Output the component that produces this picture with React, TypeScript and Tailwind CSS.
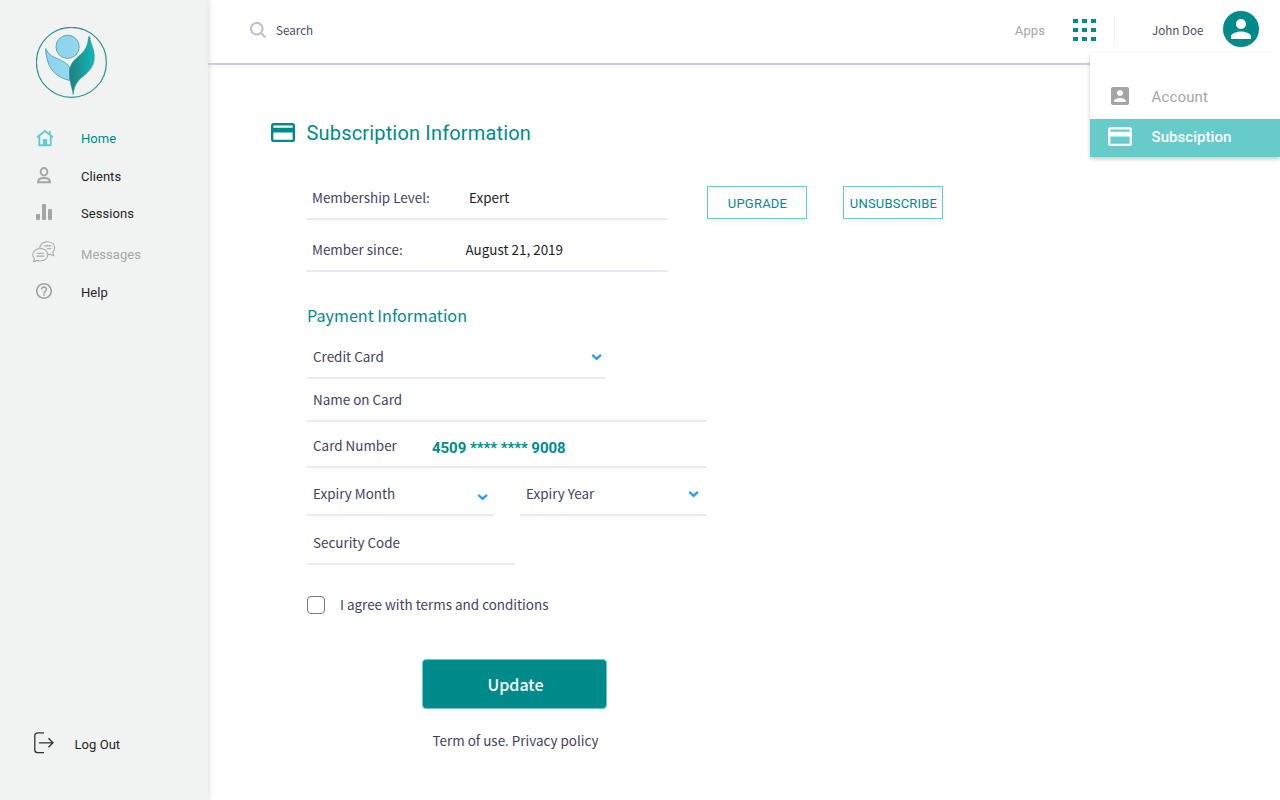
import type { ReactNode } from "react";

const CARD_PATH =
  "M20 4H4c-1.11 0-1.99.89-1.99 2L2 18c0 1.11.89 2 2 2h16c1.11 0 2-.89 2-2V6c0-1.11-.89-2-2-2zm0 14H4v-6h16v6zm0-10H4V6h16v2z";

function CardIcon({ className }: { className: string }) {
  return (
    <svg viewBox="2 4 20 16" preserveAspectRatio="none" className={className} fill="currentColor">
      <path d={CARD_PATH} />
    </svg>
  );
}

function Logo() {
  return (
    <svg width="72" height="72" viewBox="0 0 72 72" fill="none">
      <defs>
        <linearGradient id="leaf" x1="0" x2="1" y1="0" y2="0">
          <stop offset="0" stopColor="#22807f" />
          <stop offset="1" stopColor="#0cb9b7" />
        </linearGradient>
        <linearGradient id="sky" x1="0" x2="1" y1="0" y2="0">
          <stop offset="0" stopColor="#8fd3ee" />
          <stop offset="1" stopColor="#93d8ed" />
        </linearGradient>
      </defs>
      <circle cx="35.400" cy="35.400" r="35" stroke="#2f9391" strokeWidth="1.2" />
      <circle cx="31.600" cy="19.800" r="11.6" fill="url(#sky)" stroke="#56a9b4" strokeWidth="1" />
      <path
        d="M9.700 21.500C12.500 27 15.500 29.500 21 31.500C28 34.500 32 37 33.800 41V53.500C23 51 15 45 12 35C10.500 30 9.500 26 9.700 21.500Z"
        fill="url(#sky)"
        stroke="#56a9b4"
        strokeWidth="1"
      />
      <path
        d="M52.500 10C52.300 18 49 24 44 28C37 34 33.500 37.500 33.500 46C33.500 55 36 60 37.200 67.500C38 60 40 56 45 51C54 44 59 38 58.200 28C57.600 20 54.500 17 53.800 10Q53 9 52.500 10Z"
        fill="url(#leaf)"
        stroke="#2a9190"
        strokeWidth="0.6"
      />
    </svg>
  );
}

function HomeIcon() {
  return (
    <svg width="18" height="18" viewBox="0 0 18 18" fill="none" stroke="#63cbca" strokeWidth="1.9">
      <path d="M1 8.300L9 2l8 6.300" />
      <path d="M3.300 7v9.300h11.400V7" />
      <path d="M13.800 2v3.500" strokeWidth="1.800" />
      <path d="M7.300 16v-5.500h3.400V16z" fill="#63cbca" strokeWidth="1" />
    </svg>
  );
}

function ClientIcon() {
  return (
    <svg width="16" height="17" viewBox="0 0 16 17" fill="none" stroke="#a5a5a5" strokeWidth="2">
      <ellipse cx="8" cy="4.800" rx="3.300" ry="3.700" />
      <path d="M2 15.300c0-3 2.500-4.300 6-4.300s6 1.300 6 4.300z" />
    </svg>
  );
}

function SessionsIcon() {
  return (
    <svg width="16" height="16" viewBox="0 0 16 16" fill="#a5a5a5">
      <rect x="0" y="10" width="4" height="6" rx="1" />
      <rect x="6" y="0" width="4" height="16" rx="1" />
      <rect x="12" y="5" width="4" height="11" rx="1" />
    </svg>
  );
}

function MessagesIcon() {
  return (
    <svg width="23.5" height="21.5" viewBox="0 0 24 22" fill="none" stroke="#a8a8a8" strokeWidth="1.100" strokeLinecap="round">
      <path d="M8 7.500C8 3.500 11 .800 15.500 .800S23.200 3.300 23.200 7c0 2-.800 3.500-2 4.500l.900 3.500-3.500-1.500-2.300.300" />
      <path d="M8.500 7.700C4 7.700 .700 10.500 .700 14c0 1.700.700 3 1.800 4.200L1.500 21.200l3.800-1.300c1 .400 2 .500 3.200.500 4.500 0 7.700-2.700 7.700-6.300S13 7.700 8.500 7.700z" />
      <path d="M13 5h6.500M15.500 8h4M5 12.500h7M5 15.500h7" />
    </svg>
  );
}

function HelpIcon() {
  return (
    <svg width="16" height="16" viewBox="2 2 20 20" fill="#a0a0a0">
      <path d="M11 18h2v-2h-2v2zm1-16C6.480 2 2 6.480 2 12s4.480 10 10 10 10-4.480 10-10S17.520 2 12 2zm0 18c-4.410 0-8-3.590-8-8s3.590-8 8-8 8 3.590 8 8-3.590 8-8 8zm0-14c-2.210 0-4 1.790-4 4h2c0-1.100.900-2 2-2s2 .900 2 2c0 2-3 1.750-3 5h2c0-2.250 3-2.500 3-5 0-2.210-1.790-4-4-4z" />
    </svg>
  );
}

function LogoutIcon() {
  return (
    <svg width="20" height="22" viewBox="0 0 20 22" fill="none" stroke="#2c3331" strokeWidth="1.300">
      <path d="M10 .900H4Q.800 .900 .800 4V18Q.800 20.700 4 20.700H10" />
      <path d="M5 10.800h14M14.500 6.300L19 10.800l-4.500 4.500" />
    </svg>
  );
}

function Chevron() {
  return (
    <svg width="11" height="8" viewBox="0 0 11 8" fill="none" stroke="#2a9bf5" strokeWidth="2.200">
      <path d="M1.300 1.900l4.300 4 4.300-4" />
    </svg>
  );
}

const NAV: { label: string; icon: ReactNode; row: string; text: string; pad: string }[] = [
  { label: "Home", icon: <HomeIcon />, row: "h-[38px]", text: "text-[#008b8a]", pad: "pl-[36px] pb-[3px]" },
  { label: "Clients", icon: <ClientIcon />, row: "h-[37px]", text: "text-[#252525]", pad: "pl-[36px] pb-[3px]" },
  { label: "Sessions", icon: <SessionsIcon />, row: "h-[37px]", text: "text-[#252525]", pad: "pl-[36px] pb-[3px]" },
  { label: "Messages", icon: <MessagesIcon />, row: "h-[45px]", text: "text-[#a7a7a7]", pad: "pl-[32px] pb-[6px]" },
  { label: "Help", icon: <HelpIcon />, row: "h-[31px]", text: "text-[#252525]", pad: "pl-[36px] pb-[3px]" },
];

function Sidebar() {
  return (
    <aside className="flex w-[207.5px] shrink-0 flex-col bg-[#f0f3f2] pt-[27px] shadow-[1px_0_5px_rgba(0,0,0,0.14)]">
      <div className="h-[93px] pl-[36px]">
        <Logo />
      </div>
      <nav className="font-['Roboto',sans-serif] text-[13px] tracking-[0.05px]">
        {NAV.map((n) => (
          <a key={n.label} className={`flex items-center ${n.row} ${n.text}`}>
            <span className={`w-[81px] ${n.pad}`}>{n.icon}</span>
            <span>{n.label}</span>
          </a>
        ))}
      </nav>
      <a className="mt-auto mb-[43px] flex h-6 items-center font-['Roboto',sans-serif] text-[13px] tracking-[0.05px] text-[#252525]">
        <span className="w-[74.5px] pb-[4px] pl-[34px]">
          <LogoutIcon />
        </span>
        Log Out
      </a>
    </aside>
  );
}

function Header() {
  return (
    <header className="flex h-[65px] items-center border-b-2 border-[#c8ccd6] pb-[2px] pl-[42.5px] shadow-[0_2px_5px_rgba(0,0,0,0.04)]">
      <svg width="16" height="16" viewBox="0 0 17 17" fill="none" stroke="#bcbccb" strokeWidth="2.100" className="mb-px">
        <circle cx="7.200" cy="7.200" r="6.200" />
        <path d="M11.700 11.700l4.500 4.500" />
      </svg>
      <span className="ml-[10px] pb-[2px] text-[11.65px] text-[#4d4d63]">Search</span>
      <div className="ml-auto flex items-center">
        <span className="font-['Roboto',sans-serif] text-[13px] tracking-[0.1px] text-[#a5a5a5]">Apps</span>
        <div className="mb-px ml-[28px] grid grid-cols-3 gap-x-1 gap-y-[5px]">
          {Array.from({ length: 9 }, (_, i) => (
            <span key={i} className="h-1 w-[5px] bg-[#008b8a]" />
          ))}
        </div>
        <span className="mb-px ml-[18px] h-7 w-px bg-[#ebebf2]" />
        <span className="ml-[37px] w-[71px] pb-[2px] text-[11.65px] text-[#4d4d63]">John Doe</span>
        <span className="mr-[21px] mb-1 flex size-9 items-center justify-center rounded-full bg-[#008b8a]">
          <svg width="30" height="30" viewBox="0 0 24 24" fill="#fff">
            <path d="M12 12c2.210 0 4-1.790 4-4s-1.790-4-4-4-4 1.790-4 4 1.790 4 4 4zm0 2c-2.670 0-8 1.340-8 4v2h16v-2c0-2.660-5.330-4-8-4z" />
          </svg>
        </span>
      </div>
    </header>
  );
}

function AccountMenu() {
  return (
    <div className="absolute top-[53px] right-0 w-[190.5px] bg-white pt-[26px] font-['Roboto',sans-serif] text-[15px] shadow-[0_2px_4px_rgba(0,0,0,0.22)]">
      <div className="flex h-10 items-center pb-[5px] text-[#a5a5a5]">
        <span className="w-[62px] pb-[1px] pl-[21.5px]">
          <svg width="18" height="18" viewBox="3 3 18 18" fill="currentColor">
            <path d="M3 5v14c0 1.100.890 2 2 2h14c1.100 0 2-.900 2-2V5c0-1.100-.900-2-2-2H5c-1.110 0-2 .900-2 2zm12 4c0 1.660-1.340 3-3 3s-3-1.340-3-3 1.340-3 3-3 3 1.340 3 3zm-9 8c0-2 4-3.100 6-3.100s6 1.100 6 3.100v1H6v-1z" />
          </svg>
        </span>
        <span className="pt-[2px] tracking-[0.15px]">Account</span>
      </div>
      <div className="flex h-[38px] items-center bg-[#67cbca] pb-[2px] font-medium text-white">
        <span className="w-[62px] pb-[1px] pl-[18.5px]">
          <CardIcon className="h-[19.2px] w-6" />
        </span>
        <span className="tracking-[0.05px]">Subsciption</span>
      </div>
    </div>
  );
}

function Field({ label, className, children }: { label: string; className: string; children?: ReactNode }) {
  return (
    <div className={`flex items-center border-b-2 border-[#ebebef] pl-[6px] ${className}`}>
      <span>{label}</span>
      {children}
    </div>
  );
}

function OutlineButton({ children }: { children: ReactNode }) {
  return (
    <button className="h-[33px] w-[100px] border border-[#67cbca] bg-white pt-[3px] pl-px font-['Roboto',sans-serif] text-[13px] tracking-[0.2px] whitespace-nowrap text-[#008b8a] shadow-[0_3px_6px_rgba(0,0,0,0.06),inset_0_3px_6px_rgba(0,0,0,0.03)]">
      {children}
    </button>
  );
}

function Subscription() {
  return (
    <main className="flex flex-col pt-[56px] pl-[63.5px] text-[13.45px] text-[#43425d]">
      <h1 className="flex h-6 items-center font-['Roboto',sans-serif] text-xl tracking-[0.17px] text-[#008b8a]">
        <CardIcon className="mr-[11.5px] mb-[1px] h-[19.2px] w-6" />
        Subscription Information
      </h1>
      <div className="mt-[32px] ml-[35px] flex">
        <section className="w-[362px]">
          <Field label="Membership Level:" className="h-[43px] pb-[1px]">
            <span className="ml-auto w-[199px] text-[#1e1e1e]">Expert</span>
          </Field>
          <Field label="Member since:" className="h-[52px] pt-[8px]">
            <span className="ml-auto w-[202.5px] text-[#1e1e1e]">August 21, 2019</span>
          </Field>
        </section>
        <div className="mt-[9px] ml-[39px] flex gap-9">
          <OutlineButton>UPGRADE</OutlineButton>
          <OutlineButton>UNSUBSCRIBE</OutlineButton>
        </div>
      </div>
      <form className="ml-9 flex flex-col items-start">
        <h2 className="mt-[29px] h-[33px] text-[16.15px] leading-7 text-[#008b8a]">Payment Information</h2>
        <Field label="Credit Card" className="h-[45px] w-[299px] pt-[2px]">
          <span className="mt-[1px] mr-[4px] ml-auto"><Chevron /></span>
        </Field>
        <Field label="Name on Card" className="h-[43px] w-[400px]" />
        <Field label="Card Number" className="h-[46px] w-[400px] pt-[3px]">
          <span className="ml-auto w-[275px] pt-[6px] font-['Roboto',sans-serif] text-[15px] font-bold tracking-[-0.05px] text-[#008b8a]">4509 **** **** 9008</span>
        </Field>
        <div className="flex gap-[26px]">
          <Field label="Expiry Month" className="h-12 w-[187px] pt-[4px]">
            <span className="mt-[7px] mr-[6px] ml-auto"><Chevron /></span>
          </Field>
          <Field label="Expiry Year" className="h-12 w-[187px] pt-[4px]">
            <span className="mt-[1px] mr-[8px] ml-auto"><Chevron /></span>
          </Field>
        </div>
        <Field label="Security Code" className="h-[49px] w-[207.5px] pt-[5px]" />
        <label className="mt-[31px] flex h-[18px] items-center">
          <input type="checkbox" className="mr-[15px] size-[18px] appearance-none rounded-[4px] border border-[#78778b] bg-white" />
          <span className="pb-[1px]">I agree with terms and conditions</span>
        </label>
        <button type="button" className="mt-[45px] ml-[115px] h-[50px] w-[185px] rounded-[4px] border border-[#67cbca] bg-[#008b8a] pl-[2px] text-[16px] font-medium text-white">
          Update
        </button>
        <p className="mt-[21px] ml-[125.5px]">Term of use. Privacy policy</p>
      </form>
    </main>
  );
}

export default function App() {
  return (
    <div className="relative flex h-[800px] w-[1280px] overflow-hidden bg-white font-['Noto_Sans_CJK_SC',sans-serif]">
      <Sidebar />
      <div className="flex-1">
        <Header />
        <Subscription />
      </div>
      <AccountMenu />
    </div>
  );
}
